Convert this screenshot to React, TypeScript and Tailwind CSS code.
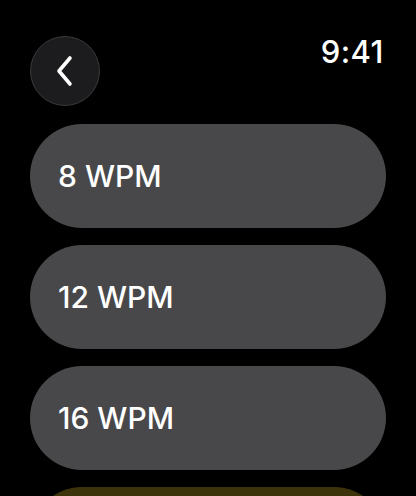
import React from 'react';

const speeds = ['8 WPM', '12 WPM', '16 WPM'];

export default function App() {
  return (
    <div
      className="h-[496px] w-[416px] overflow-hidden bg-black px-[30px] pt-[36px] text-white"
      style={{ fontFamily: 'Inter, "Noto Sans", sans-serif' }}
    >
      {/* Header */}
      <div className="flex items-start justify-between">
        <button className="flex h-[70px] w-[70px] items-center justify-center rounded-full border-[1.5px] border-[#3a3a3c] bg-[#1c1c1e]">
          <svg width="20" height="32" viewBox="0 0 20 32" fill="none" className="-ml-[1px]">
            <path
              d="M15 3 L4 16 L15 29"
              stroke="white"
              strokeWidth="3.6"
              strokeLinecap="round"
              strokeLinejoin="round"
            />
          </svg>
        </button>
        <span className="pr-[2px] text-[31px] font-medium leading-none tracking-[0.5px]">9:41</span>
      </div>

      {/* Speed list */}
      <div className="mt-[18px] flex flex-col gap-[17px]">
        {speeds.map((s) => (
          <button
            key={s}
            className="flex h-[104px] w-full shrink-0 items-center rounded-full bg-[#48484a] pl-[28px] text-left text-[30px] font-medium"
          >
            {s}
          </button>
        ))}
        <div className="h-[104px] w-full shrink-0 rounded-full bg-[#3d330b]" />
      </div>
    </div>
  );
}
